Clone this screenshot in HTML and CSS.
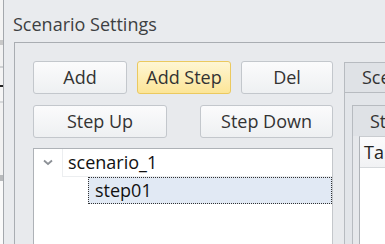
FILE: index.html
```html
<!DOCTYPE html>
<html>
<head>
<meta charset="utf-8">
<link rel="stylesheet" href="styles.css">
</head>
<body>
<div class="desk">
  <div class="edge">
    <div class="e e-top"></div>
    <div class="e e-smudge"></div>
    <div class="e e-gap1"></div>
    <div class="e e-line"></div>
    <div class="e e-gap2"></div>
    <div class="e e-black"></div>
    <div class="e e-gap3"></div>
    <div class="e e-light"></div>
    <div class="e e-mid"></div>
    <div class="e e-smudge2"></div>
    <div class="e e-rest"></div>
  </div>
  <div class="window">
    <div class="titlebar">Scenario Settings</div>
    <div class="group">
      <div class="left">
        <div class="row1">
          <button class="btn">Add</button>
          <button class="btn btn-hot">Add Step</button>
          <button class="btn">Del</button>
        </div>
        <div class="row2">
          <button class="btn btn-wide">Step Up</button>
          <button class="btn btn-wide">Step Down</button>
        </div>
        <div class="tree">
          <div class="node">
            <span class="chev"><svg width="10" height="7" viewBox="0 0 10 7"><path d="M1 1.5 L5 5 L9 1.5" fill="none" stroke="#8c9096" stroke-width="1.8"/></svg></span>
            <span class="label">scenario_1</span>
          </div>
          <div class="node child">
            <span class="label sel">step01</span>
          </div>
        </div>
      </div>
      <div class="tabs outer">
        <div class="tabbar"><div class="tab">Scenario</div></div>
        <div class="pane">
          <div class="tabs inner">
            <div class="tabbar"><div class="tab">Steps</div></div>
            <div class="pane pane-inner">
              <div class="table">
                <div class="th">Target</div>
                <div class="tbody"></div>
              </div>
            </div>
          </div>
        </div>
      </div>
    </div>
  </div>
</div>
</body>
</html>
```
FILE: styles.css
```css
* { box-sizing: border-box; }
html, body { margin: 0; padding: 0; }
body {
  width: 385px;
  height: 244px;
  overflow: hidden;
  background: #f2f2f2;
  font-family: "Open Sans", "Noto Sans", sans-serif;
  font-size: 18px;
  color: #333;
}
.desk { display: flex; height: 244px; }
.edge { width: 3px; flex: none; display: flex; flex-direction: column; }
.e { width: 3px; }
.e-top { height: 40px; background: #f4f4f4; }
.e-smudge { height: 5px; background: #c8c8c8; }
.e-gap1 { height: 21px; background: #f2f2f2; }
.e-line { height: 2px; background: #cfd1d3; }
.e-gap2 { height: 17px; background: #f4f4f4; }
.e-black { height: 2px; background: #222; }
.e-gap3 { height: 14px; background: #f6f6f6; }
.e-light { height: 2px; background: #d6d8da; }
.e-mid { height: 72px; background: #f2f2f2; }
.e-smudge2 { height: 6px; background: #b8babc; }
.e-rest { flex: 1; background: #fafafa; }

.window {
  flex: 1;
  min-width: 0;
  border-left: 1px solid #a4a8ad;
  background: #e9ebee;
  display: flex;
  flex-direction: column;
  overflow: hidden;
}
.titlebar {
  height: 42px;
  padding: 12px 0 0 9px;
  line-height: 24px;
  color: #3d3f42;
  white-space: nowrap;
  flex: none;
}
.group {
  flex: 1;
  margin-left: 10px;
  border-top: 1px solid #a9adb2;
  border-left: 1px solid #a9adb2;
  background: #e8eaed;
  padding: 18px 0 0 18px;
  display: flex;
  align-items: flex-start;
  gap: 11px;
  overflow: hidden;
}
.left { width: 300px; flex: none; display: flex; flex-direction: column; }
.row1 {
  display: grid;
  grid-template-columns: 94px 94px 92px;
  column-gap: 10px;
}
.row2 {
  display: flex;
  justify-content: space-between;
  margin-top: 11px;
}
.btn {
  height: 33px;
  padding: 0;
  margin: 0;
  font: inherit;
  line-height: 31px;
  color: #333;
  border: 1px solid #c3c7cc;
  border-radius: 3px;
  background: linear-gradient(#fbfbfc, #eef0f2);
}
.btn-hot {
  border-color: #ebc95f;
  background: linear-gradient(#fef6d4, #fce597);
}
.btn-wide { width: 134px; }
.btn-wide + .btn-wide { width: 133px; }

.tree {
  margin-top: 10px;
  height: 110px;
  border: 1px solid #aeb2b7;
  border-right-color: #c4c7cb;
  background: #fff;
  color: #111;
}
.node { display: flex; height: 28px; }
.chev {
  width: 28px;
  display: flex;
  align-items: center;
  justify-content: center;
  padding-bottom: 2px;
}
.label {
  flex: 1;
  padding-left: 5px;
  line-height: 27px;
  border-left: 1px solid #eceef0;
  border-bottom: 1px solid #eceef0;
}
.child { height: 27px; padding-left: 54px; }
.label.sel {
  border: 1px dotted #333;
  background: #e1e9f4;
  padding-left: 6px;
  line-height: 25px;
}

.tabs { display: flex; flex-direction: column; }
.outer { flex: 1; min-width: 0; margin-top: 1px; height: 190px; }
.tabbar { display: flex; flex: none; }
.tab {
  border: 1px solid #b7bbc0;
  border-bottom: none;
  background: #dfe2e6;
  color: #333;
  padding: 0 17px;
  height: 30px;
  line-height: 29px;
  white-space: nowrap;
}
.pane {
  flex: 1;
  border-top: 1px solid #b7bbc0;
  border-left: 1px solid #b7bbc0;
  background: #e2e5e9;
  padding: 12px 0 0 7px;
  display: flex;
  flex-direction: column;
}
.inner { flex: 1; }
.inner .tab { height: 31px; line-height: 30px; }
.pane-inner { padding: 0 0 0 6px; background: #e6e8eb; border-top: none; }
.table {
  flex: 1;
  border-left: 1px solid #aeb2b7;
  border-top: 1px solid #c9ccd0;
  background: #fff;
}
.th {
  height: 31px;
  line-height: 30px;
  padding-left: 4px;
  border-bottom: 1px solid #d6d9dc;
  background: linear-gradient(#fbfbfc, #f1f2f4);
  color: #222;
  white-space: nowrap;
}
```
